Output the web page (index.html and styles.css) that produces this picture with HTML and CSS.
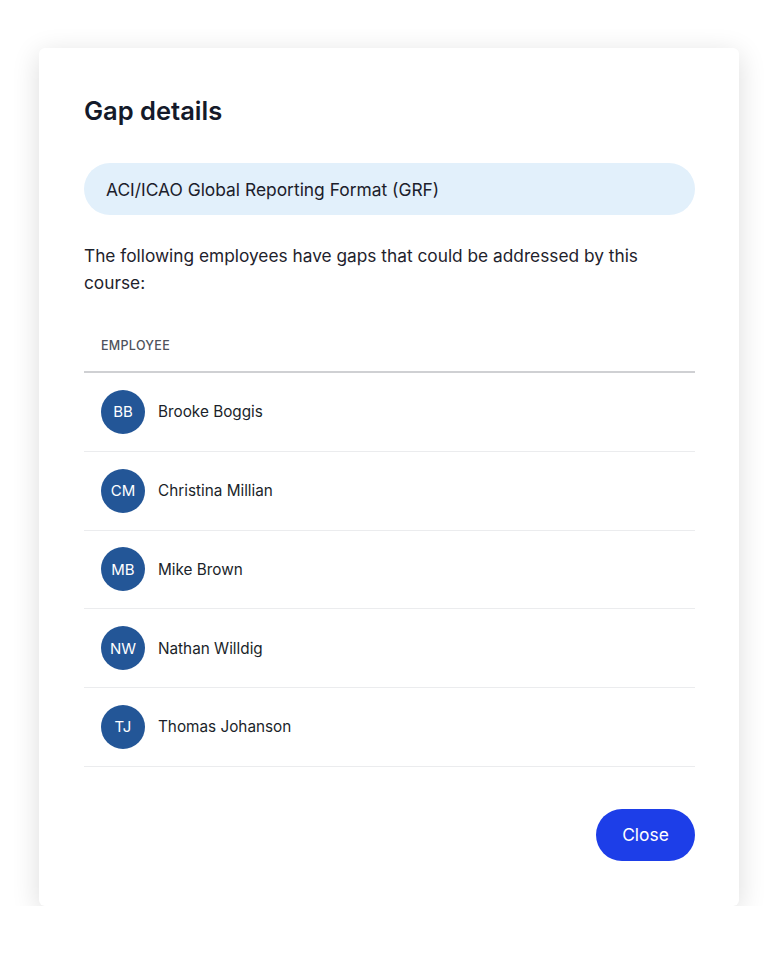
FILE: index.html
```html
<!DOCTYPE html>
<html>
<head>
    <link rel="stylesheet" href="styles.css">
</head>
<body>

<div class="modal">
    <h2 class="modal-title">Gap details</h2>

    <!-- Course -->
    <div class="course-pill">ACI/ICAO Global Reporting Format (GRF)</div>

    <p class="intro">The following employees have gaps that could be addressed by this course:</p>

    <!-- Employees -->
    <div class="table">
        <div class="table-head">Employee</div>
        <div class="row"><span class="avatar">BB</span><span class="name">Brooke Boggis</span></div>
        <div class="row"><span class="avatar">CM</span><span class="name">Christina Millian</span></div>
        <div class="row"><span class="avatar">MB</span><span class="name">Mike Brown</span></div>
        <div class="row"><span class="avatar">NW</span><span class="name">Nathan Willdig</span></div>
        <div class="row"><span class="avatar">TJ</span><span class="name">Thomas Johanson</span></div>
    </div>

    <div class="actions">
        <button class="btn-close">Close</button>
    </div>
</div>

</body>
</html>
```

FILE: styles.css
```css
body {
    margin: 0;
    font-family: Inter, 'Noto Sans', sans-serif;
    background-color: #fff;
    color: #1b1f2b;
}

.modal {
    width: 610px;
    height: 768px;
    margin: 48px 0 0 39px;
    padding: 45px;
    background-color: #fff;
    border-radius: 6px;
    box-shadow: 0 6px 28px rgba(0, 0, 0, 0.14);
}

.modal-title {
    margin: 0;
    font-size: 25.5px;
    font-weight: 600;
    line-height: 36px;
    color: #141a2a;
}

.course-pill {
    margin-top: 34px;
    height: 52px;
    width: 611px;
    box-sizing: border-box;
    padding: 1px 22px 0;
    display: flex;
    align-items: center;
    background-color: #e2f0fb;
    border-radius: 26px;
    font-size: 17.4px;
    color: #1c202b;
}

.intro {
    margin: 27px 0 0;
    width: 570px;
    font-size: 17.3px;
    line-height: 27px;
    color: #1e222c;
}

.table {
    margin-top: 42px;
    width: 611px;
}

.table-head {
    padding: 0 17px 18px;
    font-size: 12.5px;
    font-weight: 500;
    text-transform: uppercase;
    letter-spacing: 0.3px;
    color: #4e525c;
    border-bottom: 2px solid #cfd0d3;
}

.row {
    height: 77.75px;
    display: flex;
    align-items: center;
    gap: 13px;
    padding: 0 17px;
    border-bottom: 1px solid #ebecee;
}

.avatar {
    width: 44px;
    height: 44px;
    border-radius: 50%;
    background-color: #235697;
    color: #fff;
    font-size: 15px;
    display: flex;
    align-items: center;
    justify-content: center;
}

.name {
    font-size: 15.3px;
    color: #1b1f2a;
}

.actions {
    margin-top: 42px;
    width: 611px;
    display: flex;
    justify-content: flex-end;
}

.btn-close {
    width: 99px;
    height: 52px;
    border: none;
    border-radius: 26px;
    background-color: #1d3ee8;
    color: #fff;
    font-family: inherit;
    font-size: 17.4px;
    cursor: pointer;
}
```
